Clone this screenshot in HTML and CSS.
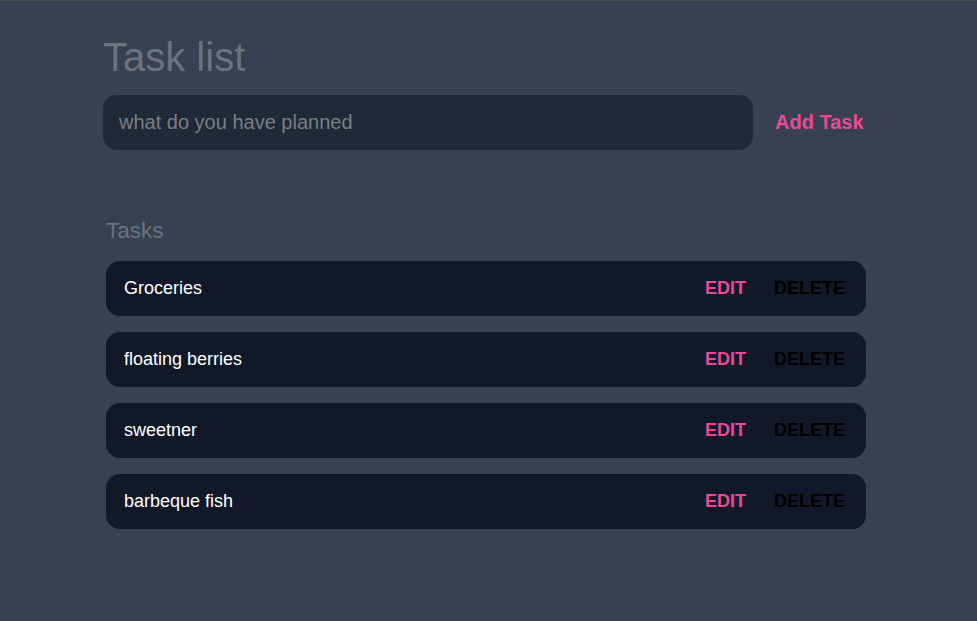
FILE: index.html
```html
<!DOCTYPE html>
<html lang="en">
<head>
<meta charset="utf-8">
<title>Task list</title>
<link rel="stylesheet" href="styles.css">
</head>
<body>
<main class="app">
  <h1 class="title">Task list</h1>
  <form class="new-task">
    <input class="new-task-input" type="text" placeholder="what do you have planned">
    <button class="add-btn" type="button">Add Task</button>
  </form>
  <section class="tasks">
    <h2 class="tasks-heading">Tasks</h2>
    <ul class="task-list">
      <li class="task"><span class="task-text">Groceries</span><div class="actions"><button class="edit">EDIT</button><button class="delete">DELETE</button></div></li>
      <li class="task"><span class="task-text">floating berries</span><div class="actions"><button class="edit">EDIT</button><button class="delete">DELETE</button></div></li>
      <li class="task"><span class="task-text">sweetner</span><div class="actions"><button class="edit">EDIT</button><button class="delete">DELETE</button></div></li>
      <li class="task"><span class="task-text">barbeque fish</span><div class="actions"><button class="edit">EDIT</button><button class="delete">DELETE</button></div></li>
    </ul>
  </section>
</main>
</body>
</html>
```
FILE: styles.css
```css
* { box-sizing: border-box; }
html, body { height: 100%; }
body {
  margin: 0;
  background: #374151;
  border-top: 1px solid #4e4e52;
  font-family: "Liberation Sans", Arial, sans-serif;
  color: #fff;
}
.app {
  width: 763px;
  margin-left: 103px;
  padding-top: 34px;
}
.title {
  margin: 0;
  font-size: 40px;
  font-weight: 400;
  color: #6b7280;
  line-height: normal;
}
.new-task {
  margin-top: 15px;
  display: flex;
  align-items: center;
  gap: 22px;
}
.new-task-input {
  width: 650px;
  height: 55px;
  border: none;
  outline: none;
  border-radius: 14px;
  background: #1f2937;
  padding: 0 16px;
  font-family: inherit;
  font-size: 20px;
  color: #e5e7eb;
}
.new-task-input::placeholder { color: #7c7e82; }
.add-btn {
  background: none;
  border: none;
  padding: 0;
  font-family: inherit;
  font-size: 20px;
  font-weight: 700;
  color: #ec4899;
  cursor: pointer;
}
.tasks { padding-left: 3px; }
.tasks-heading {
  margin: 68px 0 0;
  font-size: 22.5px;
  font-weight: 400;
  color: #6b7280;
  line-height: normal;
}
.task-list {
  list-style: none;
  margin: 17px 0 0;
  padding: 0;
  display: flex;
  flex-direction: column;
  gap: 16px;
}
.task {
  height: 55px;
  background: #111827;
  border-radius: 14px;
  display: flex;
  align-items: center;
  justify-content: space-between;
  padding: 0 21px 0 18px;
}
.task-text {
  font-size: 18px;
  color: #fff;
}
.actions {
  display: flex;
  gap: 28px;
}
.actions button {
  background: none;
  border: none;
  padding: 0;
  font-family: inherit;
  font-size: 18px;
  font-weight: 700;
  cursor: pointer;
}
.edit { color: #ec4899; }
.delete { color: #000; }
```
